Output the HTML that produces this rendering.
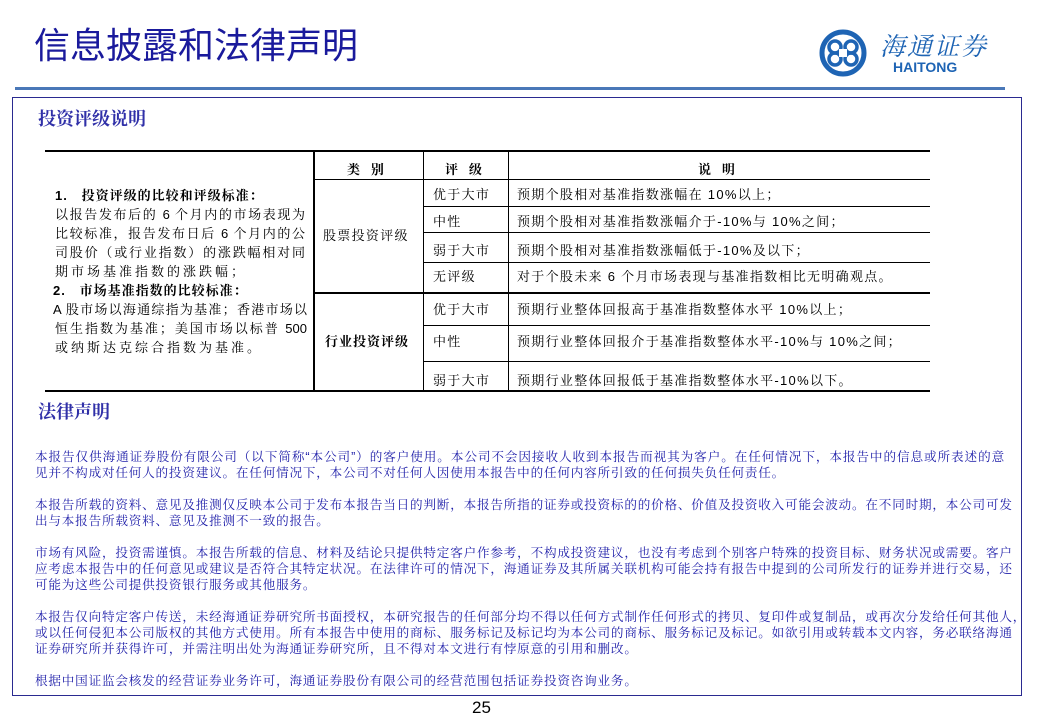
<!DOCTYPE html>
<html><head><meta charset="utf-8">
<style>
*{margin:0;padding:0;box-sizing:border-box}
body{width:1039px;height:718px;background:#fff;position:relative;overflow:hidden;font-family:"Liberation Sans","Noto Serif CJK SC",serif;color:#000}
.a{position:absolute;white-space:nowrap}
.j{position:absolute;text-align:justify;text-align-last:justify;white-space:nowrap;overflow:visible}
.hl{position:absolute;background:#000;height:1px}
.vl{position:absolute;background:#000;width:1px}
.lg{position:absolute;left:35px;width:970px;font-size:12.6px;color:#1c1ca8;line-height:16px;text-align:justify;text-align-last:justify;white-space:nowrap;letter-spacing:0.8px}
.lg.l{text-align-last:left}
.c{font-size:13px;line-height:16px}
.t{letter-spacing:1.3px}
.lc{letter-spacing:3px}
</style></head><body>
<div class="a" style="left:34px;top:21px;font-size:36px;color:#1a1a9c;font-family:'Noto Sans CJK SC',sans-serif;letter-spacing:0px;line-height:44px">信息披露和法律声明</div>
<svg class="a" style="left:818px;top:28px" width="50" height="50" viewBox="0 0 50 50">
<circle cx="25" cy="25" r="21" fill="none" stroke="#1e64b4" stroke-width="5"/>
<circle cx="17" cy="19" r="6" fill="none" stroke="#1e64b4" stroke-width="3.5"/>
<circle cx="33" cy="19" r="6" fill="none" stroke="#1e64b4" stroke-width="3.5"/>
<circle cx="17" cy="31" r="6" fill="none" stroke="#1e64b4" stroke-width="3.5"/>
<circle cx="33" cy="31" r="6" fill="none" stroke="#1e64b4" stroke-width="3.5"/>
<rect x="21" y="21" width="8" height="8" fill="#fff"/>
</svg>
<div class="a" style="left:880px;top:30px;font-size:25px;color:#1e64b4;font-style:italic;font-family:'Noto Serif CJK SC',serif;letter-spacing:2px;line-height:30px">海通证券</div>
<div class="a" style="left:893px;top:59px;font-size:14px;color:#1e64b4;font-weight:bold;line-height:16px">HAITONG</div>
<div class="a" style="left:15px;top:87px;width:990px;height:3px;background:#4a78b8"></div>
<div class="a" style="left:12px;top:97px;width:1010px;height:599px;border:1px solid #2a2a90"></div>
<div class="a" style="left:38px;top:107px;font-size:18px;color:#3030a8;font-weight:bold;line-height:24px">投资评级说明</div>
<div class="hl" style="left:45px;top:150px;width:885px;height:2px"></div>
<div class="hl" style="left:313px;top:179px;width:617px"></div>
<div class="hl" style="left:423px;top:206px;width:507px"></div>
<div class="hl" style="left:423px;top:232px;width:507px"></div>
<div class="hl" style="left:423px;top:262px;width:507px"></div>
<div class="hl" style="left:313px;top:292px;width:617px;height:2px"></div>
<div class="hl" style="left:423px;top:325px;width:507px"></div>
<div class="hl" style="left:423px;top:361px;width:507px"></div>
<div class="hl" style="left:45px;top:390px;width:885px;height:2px"></div>
<div class="vl" style="left:313px;top:150px;height:241px;width:2px"></div>
<div class="vl" style="left:423px;top:150px;height:241px"></div>
<div class="vl" style="left:508px;top:150px;height:241px"></div>
<div class="a c" style="left:347px;top:162px;font-weight:bold">类 &nbsp;&nbsp;别</div>
<div class="a c" style="left:445px;top:162px;font-weight:bold">评 &nbsp;&nbsp;级</div>
<div class="a c" style="left:698px;top:162px;font-weight:bold">说 &nbsp;&nbsp;明</div>
<div class="a c t" style="left:323px;top:228px">股票投资评级</div>
<div class="a c" style="left:325px;top:334px;font-weight:bold;letter-spacing:1px">行业投资评级</div>
<div class="a c t" style="left:433px;top:187px">优于大市</div>
<div class="a c t" style="left:433px;top:214px">中性</div>
<div class="a c t" style="left:433px;top:243px">弱于大市</div>
<div class="a c t" style="left:433px;top:269px">无评级</div>
<div class="a c t" style="left:433px;top:302px">优于大市</div>
<div class="a c t" style="left:433px;top:334px">中性</div>
<div class="a c t" style="left:433px;top:373px">弱于大市</div>
<div class="a c t" style="left:517px;top:187px">预期个股相对基准指数涨幅在 10%以上；</div>
<div class="a c t" style="left:517px;top:214px">预期个股相对基准指数涨幅介于-10%与 10%之间；</div>
<div class="a c t" style="left:517px;top:243px">预期个股相对基准指数涨幅低于-10%及以下；</div>
<div class="a c t" style="left:517px;top:269px">对于个股未来 6 个月市场表现与基准指数相比无明确观点。</div>
<div class="a c t" style="left:517px;top:302px">预期行业整体回报高于基准指数整体水平 10%以上；</div>
<div class="a c t" style="left:517px;top:334px">预期行业整体回报介于基准指数整体水平-10%与 10%之间；</div>
<div class="a c t" style="left:517px;top:373px">预期行业整体回报低于基准指数整体水平-10%以下。</div>
<div class="a c" style="left:55px;top:188px;font-weight:bold;letter-spacing:1px">1. &nbsp;&nbsp;投资评级的比较和评级标准：</div>
<div class="j c" style="left:55px;top:207px;width:250px">以报告发布后的 6 个月内的市场表现为</div>
<div class="j c" style="left:55px;top:226px;width:250px">比较标准，报告发布日后 6 个月内的公</div>
<div class="j c" style="left:55px;top:245px;width:250px">司股价（或行业指数）的涨跌幅相对同</div>
<div class="a c lc" style="left:55px;top:264px">期市场基准指数的涨跌幅；</div>
<div class="a c" style="left:53px;top:283px;font-weight:bold;letter-spacing:1px">2. &nbsp;&nbsp;市场基准指数的比较标准：</div>
<div class="j c" style="left:53px;top:302px;width:254px">A 股市场以海通综指为基准；香港市场以</div>
<div class="j c" style="left:55px;top:321px;width:252px">恒生指数为基准；美国市场以标普 500</div>
<div class="a c lc" style="left:55px;top:340px">或纳斯达克综合指数为基准。</div>
<div class="a" style="left:38px;top:400px;font-size:18px;color:#3030a8;font-weight:bold;line-height:24px">法律声明</div>
<div class="lg" style="top:449px">本报告仅供海通证券股份有限公司（以下简称“本公司”）的客户使用。本公司不会因接收人收到本报告而视其为客户。在任何情况下，本报告中的信息或所表述的意</div>
<div class="lg l" style="top:465px">见并不构成对任何人的投资建议。在任何情况下，本公司不对任何人因使用本报告中的任何内容所引致的任何损失负任何责任。</div>
<div class="lg" style="top:497px">本报告所载的资料、意见及推测仅反映本公司于发布本报告当日的判断，本报告所指的证券或投资标的的价格、价值及投资收入可能会波动。在不同时期，本公司可发</div>
<div class="lg l" style="top:513px">出与本报告所载资料、意见及推测不一致的报告。</div>
<div class="lg" style="top:545px">市场有风险，投资需谨慎。本报告所载的信息、材料及结论只提供特定客户作参考，不构成投资建议，也没有考虑到个别客户特殊的投资目标、财务状况或需要。客户</div>
<div class="lg" style="top:561px">应考虑本报告中的任何意见或建议是否符合其特定状况。在法律许可的情况下，海通证券及其所属关联机构可能会持有报告中提到的公司所发行的证券并进行交易，还</div>
<div class="lg l" style="top:577px">可能为这些公司提供投资银行服务或其他服务。</div>
<div class="lg" style="top:609px">本报告仅向特定客户传送，未经海通证券研究所书面授权，本研究报告的任何部分均不得以任何方式制作任何形式的拷贝、复印件或复制品，或再次分发给任何其他人，</div>
<div class="lg" style="top:625px">或以任何侵犯本公司版权的其他方式使用。所有本报告中使用的商标、服务标记及标记均为本公司的商标、服务标记及标记。如欲引用或转载本文内容，务必联络海通</div>
<div class="lg l" style="top:641px">证券研究所并获得许可，并需注明出处为海通证券研究所，且不得对本文进行有悖原意的引用和删改。</div>
<div class="lg l" style="top:673px">根据中国证监会核发的经营证券业务许可，海通证券股份有限公司的经营范围包括证券投资咨询业务。</div>
<div class="a" style="left:472px;top:698px;font-size:17px;line-height:20px">25</div>
</body></html>
